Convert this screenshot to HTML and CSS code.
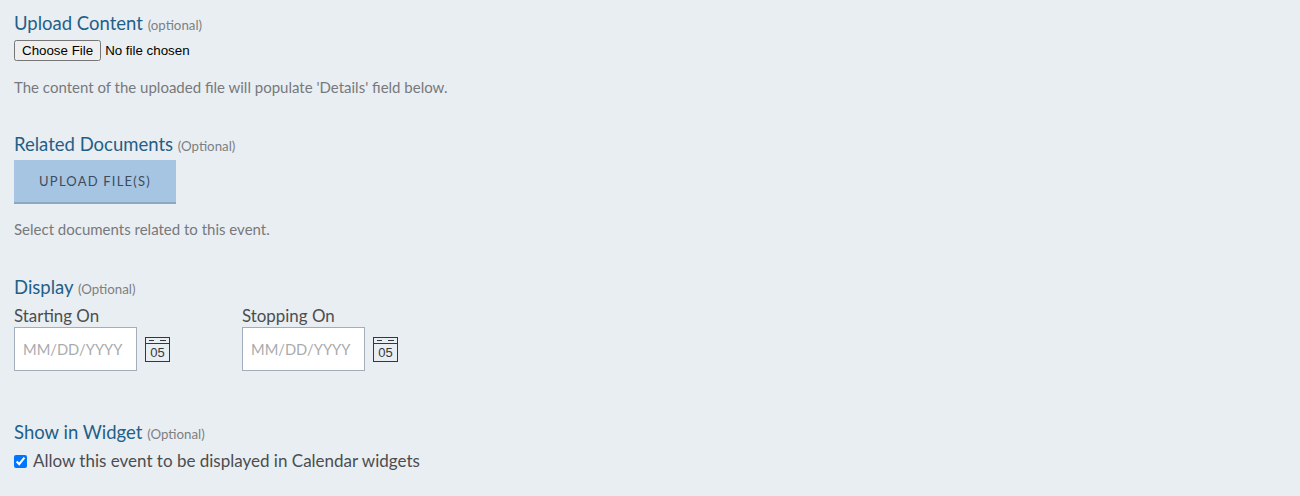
FILE: index.html
```html
<!DOCTYPE html>
<html lang="en">
<head>
    <meta charset="UTF-8">
    <title>Event</title>
    <link rel="stylesheet" href="styles.css">
</head>
<body>
    <form class="event-form">
        <section class="field-group upload-content">
            <h3 class="field-title">Upload Content <small>(optional)</small></h3>
            <input type="file" id="content" class="file-input">
            <p class="help">The content of the uploaded file will populate 'Details' field below.</p>
        </section>

        <section class="field-group related-docs">
            <h3 class="field-title">Related Documents <small>(Optional)</small></h3>
            <button type="button" class="upload-btn">UPLOAD FILE(S)</button>
            <p class="help">Select documents related to this event.</p>
        </section>

        <section class="field-group display">
            <h3 class="field-title">Display <small>(Optional)</small></h3>
            <div class="date-row">
                <div class="date-field">
                    <label for="start">Starting On</label>
                    <div class="date-control">
                        <input type="text" id="start" class="date-input" placeholder="MM/DD/YYYY">
                        <svg class="cal-icon" width="25" height="25" viewBox="0 0 25 25">
                            <rect x="0.5" y="0.5" width="24" height="24" fill="none" stroke="#33383d"/>
                            <path d="M0 6.5H25M4 3.5H9M15 3.5H21" stroke="#33383d" fill="none"/>
                            <text x="12.5" y="20" text-anchor="middle" class="cal-day">05</text>
                        </svg>
                    </div>
                </div>
                <div class="date-field">
                    <label for="stop">Stopping On</label>
                    <div class="date-control">
                        <input type="text" id="stop" class="date-input" placeholder="MM/DD/YYYY">
                        <svg class="cal-icon" width="25" height="25" viewBox="0 0 25 25">
                            <rect x="0.5" y="0.5" width="24" height="24" fill="none" stroke="#33383d"/>
                            <path d="M0 6.5H25M4 3.5H9M15 3.5H21" stroke="#33383d" fill="none"/>
                            <text x="12.5" y="20" text-anchor="middle" class="cal-day">05</text>
                        </svg>
                    </div>
                </div>
            </div>
        </section>

        <section class="field-group widget">
            <h3 class="field-title">Show in Widget <small>(Optional)</small></h3>
            <label class="check-row"><input type="checkbox" checked> Allow this event to be displayed in Calendar widgets</label>
        </section>
    </form>
</body>
</html>
```

FILE: styles.css
```css
body {
    font-family: "Lato", "Open Sans", sans-serif;
    background-color: #e9eef2;
    color: #3f4347;
    margin: 0;
    padding: 0;
}

.event-form {
    padding: 13px 14px 0;
}

.field-title {
    margin: 0;
    font-size: 18.5px;
    line-height: 21px;
    font-weight: 400;
    color: #1f6088;
}

.field-title small {
    font-size: 13.3px;
    color: #7d7f82;
}

.file-input {
    display: block;
    margin-top: 4px;
    font-family: "Liberation Sans", Arial, sans-serif;
    font-size: 13.33px;
    color: #000;
}

.help {
    margin: 0;
    font-size: 15px;
    line-height: 20px;
    color: #77797c;
}

.upload-content .help {
    margin-top: 16px;
}

.related-docs {
    margin-top: 37px;
}

.upload-btn {
    display: block;
    width: 162px;
    height: 44px;
    margin-top: 3px;
    border: none;
    border-bottom: 2px solid #8fa5c4;
    background-color: #a6c5e3;
    color: #3f4a5a;
    font-family: inherit;
    font-size: 13px;
    letter-spacing: 1.2px;
}

.related-docs .help {
    margin-top: 15px;
}

.display {
    margin-top: 38px;
}

.date-row {
    display: flex;
    gap: 72px;
    margin-top: 6px;
}

.date-field label {
    display: block;
    font-size: 16.9px;
    line-height: 19px;
    color: #4b4d50;
}

.date-control {
    display: flex;
    align-items: center;
    gap: 8px;
    margin-top: 2px;
}

.date-input {
    width: 123px;
    height: 44px;
    box-sizing: border-box;
    padding: 0 8px;
    border: 1px solid #a3adbb;
    background-color: white;
    font-family: inherit;
    font-size: 14.7px;
}

.date-input::placeholder {
    color: #a9abad;
}

.cal-icon {
    flex: none;
    margin-top: 1px;
}

.cal-day {
    font-family: "Liberation Sans", Arial, sans-serif;
    font-size: 13px;
    fill: #33383d;
}

.widget {
    margin-top: 51px;
}

.check-row {
    display: flex;
    align-items: center;
    gap: 6px;
    margin-top: 6px;
    font-size: 17px;
    line-height: 20px;
    color: #4b4d50;
}

.check-row input {
    margin: 0;
    width: 13px;
    height: 13px;
}
```
